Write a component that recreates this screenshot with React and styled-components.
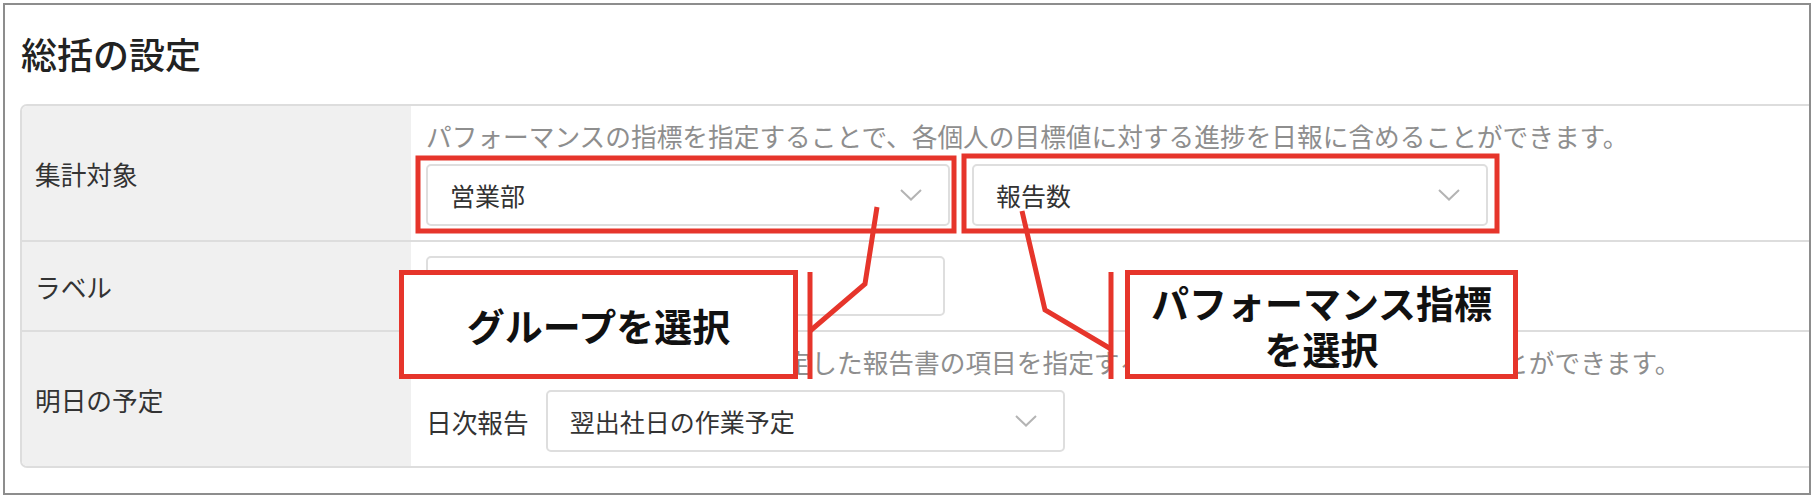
import React from 'react';
import styled, { createGlobalStyle } from 'styled-components';

const RED = '#e6352b';

const GlobalStyle = createGlobalStyle`
	html,
	body {
		margin: 0;
		padding: 0;
		background: #ffffff;
	}

	body {
		font-family: "Noto Sans CJK JP", "Noto Sans", sans-serif;
		color: #333333;
	}
`;

const Page = styled.div`
	position: relative;
	width: 1814px;
	height: 498px;
	padding: 3px;
	box-sizing: border-box;
`;

const Frame = styled.section`
	height: 100%;
	box-sizing: border-box;
	border: 2px solid #8d8d8d;
	padding-left: 15px;
	overflow: hidden;
`;

const Title = styled.h2`
	margin: 0;
	height: 99px;
	padding: 23px 0 0 1px;
	box-sizing: border-box;
	font-size: 36px;
	font-weight: 500;
	line-height: 50px;
	color: #222222;
`;

const Table = styled.div`
	width: 1840px;
	border: 2px solid #dddddd;
	border-radius: 7px;
	overflow: hidden;
`;

const Row = styled.div`
	display: grid;
	grid-template-columns: 389px 1fr;

	& + & {
		border-top: 2px solid #dddddd;
	}
`;

const Label = styled.div`
	display: flex;
	align-items: center;
	padding-left: 13px;
	background: #f0f0f0;
	font-size: 25.7px;
	color: #333333;
`;

const Cell = styled.div`
	display: flex;
	flex-direction: column;
	justify-content: center;
	padding: ${ props => props.pad || '12px 0 14px 15px' };
	background: #ffffff;
`;

const Hint = styled.p`
	margin: 0 0 10px;
	font-size: 25.7px;
	line-height: 36px;
	color: #8e8e8e;
	white-space: nowrap;
`;

const Controls = styled.div`
	display: flex;
	align-items: center;
	gap: ${ props => props.gap || 22 }px;
`;

const Caption = styled.span`
	font-size: 25.7px;
	color: #333333;
	margin-right: -5px;
`;

const Select = styled.div`
	display: flex;
	align-items: center;
	justify-content: space-between;
	width: ${ props => props.width || 519 }px;
	height: ${ props => props.height || 62 }px;
	padding: 0 26px 0 22px;
	box-sizing: border-box;
	border: 2px solid #dedede;
	border-radius: 5px;
	background: #ffffff;
	font-size: 25px;
	color: #333333;
`;

const Overlay = styled.svg`
	position: absolute;
	top: 0;
	left: 0;
	pointer-events: none;
`;

const Callout = styled.div`
	position: absolute;
	left: ${ props => props.x }px;
	top: ${ props => props.y }px;
	width: ${ props => props.w }px;
	height: ${ props => props.h }px;
	box-sizing: border-box;
	display: flex;
	align-items: center;
	justify-content: center;
	border: 5px solid ${ RED };
	background: #ffffff;
	font-size: 38px;
	font-weight: 700;
	line-height: 46px;
	text-align: center;
	color: #111111;
`;

const Chevron = () => (
	<svg width="22" height="12" viewBox="0 0 22 12">
		<path d="M1 1 L11 10.5 L21 1" fill="none" stroke="#b4b4b4" strokeWidth="2"/>
	</svg>
);

const App = () => {
	return (
		<Page>
			<GlobalStyle/>
			<Frame>
				<Title>総括の設定</Title>
				<Table>
					<Row>
						<Label>集計対象</Label>
						<Cell>
							<Hint>パフォーマンスの指標を指定することで、各個人の目標値に対する進捗を日報に含めることができます。</Hint>
							<Controls>
								<Select width={ 524 }>営業部<Chevron/></Select>
								<Select width={ 516 }>報告数<Chevron/></Select>
							</Controls>
						</Cell>
					</Row>
					<Row>
						<Label>ラベル</Label>
						<Cell pad='14px 0 14px 15px'>
							<Select height={ 60 }/>
						</Cell>
					</Row>
					<Row>
						<Label>明日の予定</Label>
						<Cell>
							<Hint>明日の予定には、日次報告で指定した報告書の項目を指定することで、明日の予定に含めることができます。</Hint>
							<Controls gap={ 22 }>
								<Caption>日次報告</Caption>
								<Select>翌出社日の作業予定<Chevron/></Select>
							</Controls>
						</Cell>
					</Row>
				</Table>
			</Frame>

			<Overlay width="1814" height="498" viewBox="0 0 1814 498">
				<g fill="none" stroke={ RED } strokeWidth="5">
					<rect x="418" y="158" width="536" height="73"/>
					<rect x="964" y="156" width="533" height="75"/>
					<line x1="810" y1="272" x2="810" y2="379"/>
					<line x1="1111" y1="272" x2="1111" y2="379"/>
					<polyline points="810,331 865,284 877,207" strokeLinejoin="miter"/>
					<polyline points="1111,349 1045,310 1022,211" strokeLinejoin="miter"/>
				</g>
			</Overlay>

			<Callout x={ 399 } y={ 270 } w={ 399 } h={ 109 }>グループを選択</Callout>
			<Callout x={ 1125 } y={ 270 } w={ 393 } h={ 109 }>パフォーマンス指標<br/>を選択</Callout>
		</Page>
	);
};

export default App;
